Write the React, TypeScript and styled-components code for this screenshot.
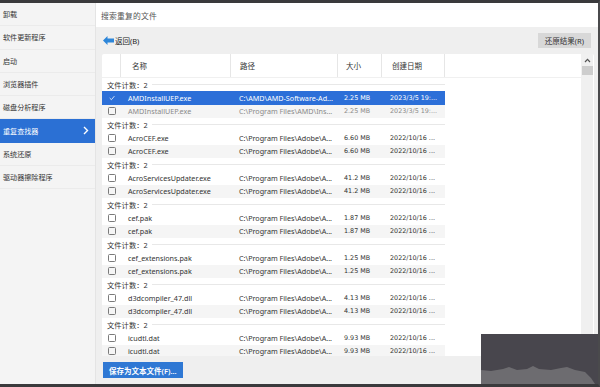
import { createGlobalStyle, styled } from "styled-components";

const GlobalStyle = createGlobalStyle`
  html, body { margin: 0; padding: 0; background: #fff; }
  body { width: 600px; height: 387px; overflow: hidden; }
`;

const CJK = `"Noto Sans", "Noto Sans CJK SC", sans-serif`;

const Window = styled.div`
  position: relative;
  width: 600px;
  height: 387px;
  box-sizing: border-box;
  border-top: 3px solid #3a3a3c;
  border-bottom: 3px solid #3a3a3c;
  border-right: 2px solid #4a4a4c;
  display: flex;
  font-family: ${CJK};
  color: #222;
  overflow: hidden;
`;

const Sidebar = styled.div`
  width: 95px;
  flex: none;
  background: #f4f4f4;
  border-right: 1px solid #e4e4e4;
  display: flex;
  flex-direction: column;
`;

const NavItem = styled.div<{ $active?: boolean }>`
  height: 23.3px;
  box-sizing: border-box;
  display: flex;
  align-items: center;
  justify-content: space-between;
  padding: 0 6px 0 3px;
  font-size: 7.1px;
  color: ${({ $active }) => ($active ? "#fff" : "#333")};
  background: ${({ $active }) => ($active ? "#2b70d4" : "transparent")};
  border-bottom: 1px solid ${({ $active }) => ($active ? "#2b70d4" : "#ebebeb")};
`;

const Main = styled.div`
  flex: 1;
  display: flex;
  flex-direction: column;
  background: #efefef;
`;

const Header = styled.div`
  height: 24px;
  flex: none;
  background: #fff;
  display: flex;
  align-items: center;
  padding-left: 5px;
  font-size: 7.8px;
  color: #555;
  letter-spacing: 0.2px;
`;

const Toolbar = styled.div`
  height: 27px;
  flex: none;
  display: flex;
  align-items: center;
  justify-content: space-between;
  padding: 0 7px 0 7px;
`;

const BackButton = styled.div`
  display: flex;
  align-items: center;
  gap: 1px;
  font-size: 7.5px;
  color: #222;
`;

const GrayButton = styled.div`
  height: 15px;
  padding: 0 7px;
  display: flex;
  align-items: center;
  background: #d8d8d8;
  font-size: 7.5px;
  color: #333;
`;

const Table = styled.div`
  margin: 0 4px 0 6px;
  height: 302px;
  flex: none;
  background: #fff;
  border-radius: 2px;
  display: flex;
  overflow: hidden;
`;

const TableInner = styled.div`
  flex: 1;
  display: flex;
  flex-direction: column;
  overflow: hidden;
`;

const COLS = "19px 110px 107px 44px 63px";

const HeadRow = styled.div`
  height: 23px;
  flex: none;
  display: grid;
  grid-template-columns: ${COLS};
  border-bottom: 1px solid #f0f0f0;
`;

const HeadCell = styled.div<{ $pad: number }>`
  display: flex;
  align-items: center;
  padding-left: ${({ $pad }) => $pad}px;
  border-right: 1px solid #e6e6e6;
  font-size: 7.5px;
  color: #333;
`;

const GroupLabel = styled.div`
  width: 343px;
  height: 13px;
  display: flex;
  align-items: center;
  gap: 4px;
  padding-left: 5px;
  box-sizing: border-box;
  font-size: 7.3px;
  color: #333;
  &::after {
    content: "";
    flex: 1;
    border-top: 1px solid #e8e8e8;
  }
`;

const Row = styled.div<{ $selected?: boolean; $alt?: boolean; $dim?: boolean }>`
  height: 13.5px;
  width: 343px;
  display: grid;
  grid-template-columns: ${COLS};
  align-items: center;
  background: ${({ $selected, $alt }) =>
    $selected ? "#2c6fd8" : $alt ? "#f5f5f5" : "#fff"};
  color: ${({ $selected, $dim }) => ($selected ? "#fff" : $dim ? "#8a8a8a" : "#333")};
`;

const Check = styled.div<{ $checked?: boolean }>`
  width: 8px;
  height: 8px;
  margin-left: 6px;
  box-sizing: border-box;
  border: 1px solid ${({ $checked }) => ($checked ? "transparent" : "#7a7a7a")};
  border-radius: 1.5px;
  display: flex;
  align-items: center;
  justify-content: center;
`;

const Cell = styled.div<{ $pad: number; $mono?: boolean }>`
  padding-left: ${({ $pad }) => $pad}px;
  white-space: nowrap;
  overflow: hidden;
  font-family: ${({ $mono }) => ($mono ? `"DejaVu Sans", sans-serif` : `"Noto Sans", sans-serif`)};
  font-size: ${({ $mono }) => ($mono ? "6.4px" : "7.2px")};
`;

const ScrollBar = styled.div`
  width: 12px;
  flex: none;
  margin-right: 1px;
  background: #f0f0f0;
  display: flex;
  flex-direction: column;
  align-items: center;
`;

const ScrollArrow = styled.div`
  height: 12px;
  display: flex;
  align-items: center;
  justify-content: center;
`;

const Thumb = styled.div`
  width: 11px;
  height: 9px;
  background: #cdcdcd;
`;

const Footer = styled.div`
  flex: 1;
  display: flex;
  align-items: center;
  padding-left: 7px;
`;

const BlueButton = styled.div`
  height: 16px;
  padding: 0 6px;
  display: flex;
  align-items: center;
  background: #2f78d4;
  color: #fff;
  font-size: 7.5px;
  font-weight: 600;
`;

const Watermark = styled.svg`
  position: absolute;
  right: -2px;
  bottom: -3px;
`;

const navItems = [
  "卸载",
  "软件更新程序",
  "启动",
  "浏览器插件",
  "磁盘分析程序",
  "重复查找器",
  "系统还原",
  "驱动器擦除程序",
];

const ADOBE = "C:\\Program Files\\Adobe\\A...";
const OCT = "2022/10/16 ...";

type FileRow = { path: string; size: string; date: string; selected?: boolean; dim?: boolean };
type Group = { name: string; rows: FileRow[] };

const groups: Group[] = [
  {
    name: "AMDInstallUEP.exe",
    rows: [
      { path: "C:\\AMD\\AMD-Software-Ad...", size: "2.25 MB", date: "2023/3/5 19:...", selected: true },
      { path: "C:\\Program Files\\AMD\\Ins...", size: "2.25 MB", date: "2023/3/5 19:...", dim: true },
    ],
  },
  { name: "AcroCEF.exe", rows: [{ path: ADOBE, size: "6.60 MB", date: OCT }, { path: ADOBE, size: "6.60 MB", date: OCT }] },
  { name: "AcroServicesUpdater.exe", rows: [{ path: ADOBE, size: "41.2 MB", date: OCT }, { path: ADOBE, size: "41.2 MB", date: OCT }] },
  { name: "cef.pak", rows: [{ path: ADOBE, size: "1.87 MB", date: OCT }, { path: ADOBE, size: "1.87 MB", date: OCT }] },
  { name: "cef_extensions.pak", rows: [{ path: ADOBE, size: "1.25 MB", date: OCT }, { path: ADOBE, size: "1.25 MB", date: OCT }] },
  { name: "d3dcompiler_47.dll", rows: [{ path: ADOBE, size: "4.13 MB", date: OCT }, { path: ADOBE, size: "4.13 MB", date: OCT }] },
  { name: "icudtl.dat", rows: [{ path: ADOBE, size: "9.93 MB", date: OCT }, { path: ADOBE, size: "9.93 MB", date: OCT }] },
];

function BackArrow() {
  return (
    <svg width="11" height="9" viewBox="0 0 11 9">
      <path d="M0 4.5 L4.5 0 L4.5 2.6 L11 2.6 L11 6.4 L4.5 6.4 L4.5 9 Z" fill="#2d86d9" />
    </svg>
  );
}

export default function App() {
  return (
    <>
      <GlobalStyle />
      <Window>
        <Sidebar>
          {navItems.map((label) => (
            <NavItem key={label} $active={label === "重复查找器"}>
              <span>{label}</span>
              {label === "重复查找器" && (
                <svg width="6" height="9" viewBox="0 0 6 9">
                  <path d="M1 1 L4.5 4.5 L1 8" stroke="#fff" strokeWidth="1.4" fill="none" />
                </svg>
              )}
            </NavItem>
          ))}
        </Sidebar>
        <Main>
          <Header>搜索重复的文件</Header>
          <Toolbar>
            <BackButton>
              <BackArrow />
              <span>返回(B)</span>
            </BackButton>
            <GrayButton>还原结果(R)</GrayButton>
          </Toolbar>
          <Table>
            <TableInner>
              <HeadRow>
                <HeadCell $pad={0} />
                <HeadCell $pad={11}>名称</HeadCell>
                <HeadCell $pad={9}>路径</HeadCell>
                <HeadCell $pad={8}>大小</HeadCell>
                <HeadCell $pad={10}>创建日期</HeadCell>
              </HeadRow>
              {groups.map((g) => (
                <div key={g.name}>
                  <GroupLabel>文件计数：2</GroupLabel>
                  {g.rows.map((r, i) => (
                    <Row key={i} $selected={r.selected} $dim={r.dim} $alt={i === 1}>
                      <Check $checked={r.selected}>
                        {r.selected && (
                          <svg width="7" height="6" viewBox="0 0 7 6">
                            <path d="M0.8 3 L2.8 5 L6.3 0.8" stroke="#fff" strokeWidth="0.9" fill="none" />
                          </svg>
                        )}
                      </Check>
                      <Cell $pad={7}>{g.name}</Cell>
                      <Cell $pad={8}>{r.path}</Cell>
                      <Cell $pad={6} $mono>{r.size}</Cell>
                      <Cell $pad={8} $mono>{r.date}</Cell>
                    </Row>
                  ))}
                </div>
              ))}
            </TableInner>
            <ScrollBar>
              <ScrollArrow>
                <svg width="7" height="5" viewBox="0 0 7 5">
                  <path d="M1 4 L3.5 1.3 L6 4" stroke="#555" strokeWidth="1.2" fill="none" />
                </svg>
              </ScrollArrow>
              <Thumb />
            </ScrollBar>
          </Table>
          <Footer>
            <BlueButton>保存为文本文件(F)...</BlueButton>
          </Footer>
        </Main>
        <Watermark width="119" height="53" viewBox="0 0 119 53">
          <rect x="0" y="0" width="119" height="53" fill="#48464d" />
          <path
            d="M0 36 L10 37 L22 35 L28 33 L36 36 L46 35 L52 32 L58 35 L70 36 L80 34 L86 33 L94 36 L104 38 L110 44 L114 50 L119 53 L0 53 Z"
            fill="#6d6c70"
          />
        </Watermark>
      </Window>
    </>
  );
}
